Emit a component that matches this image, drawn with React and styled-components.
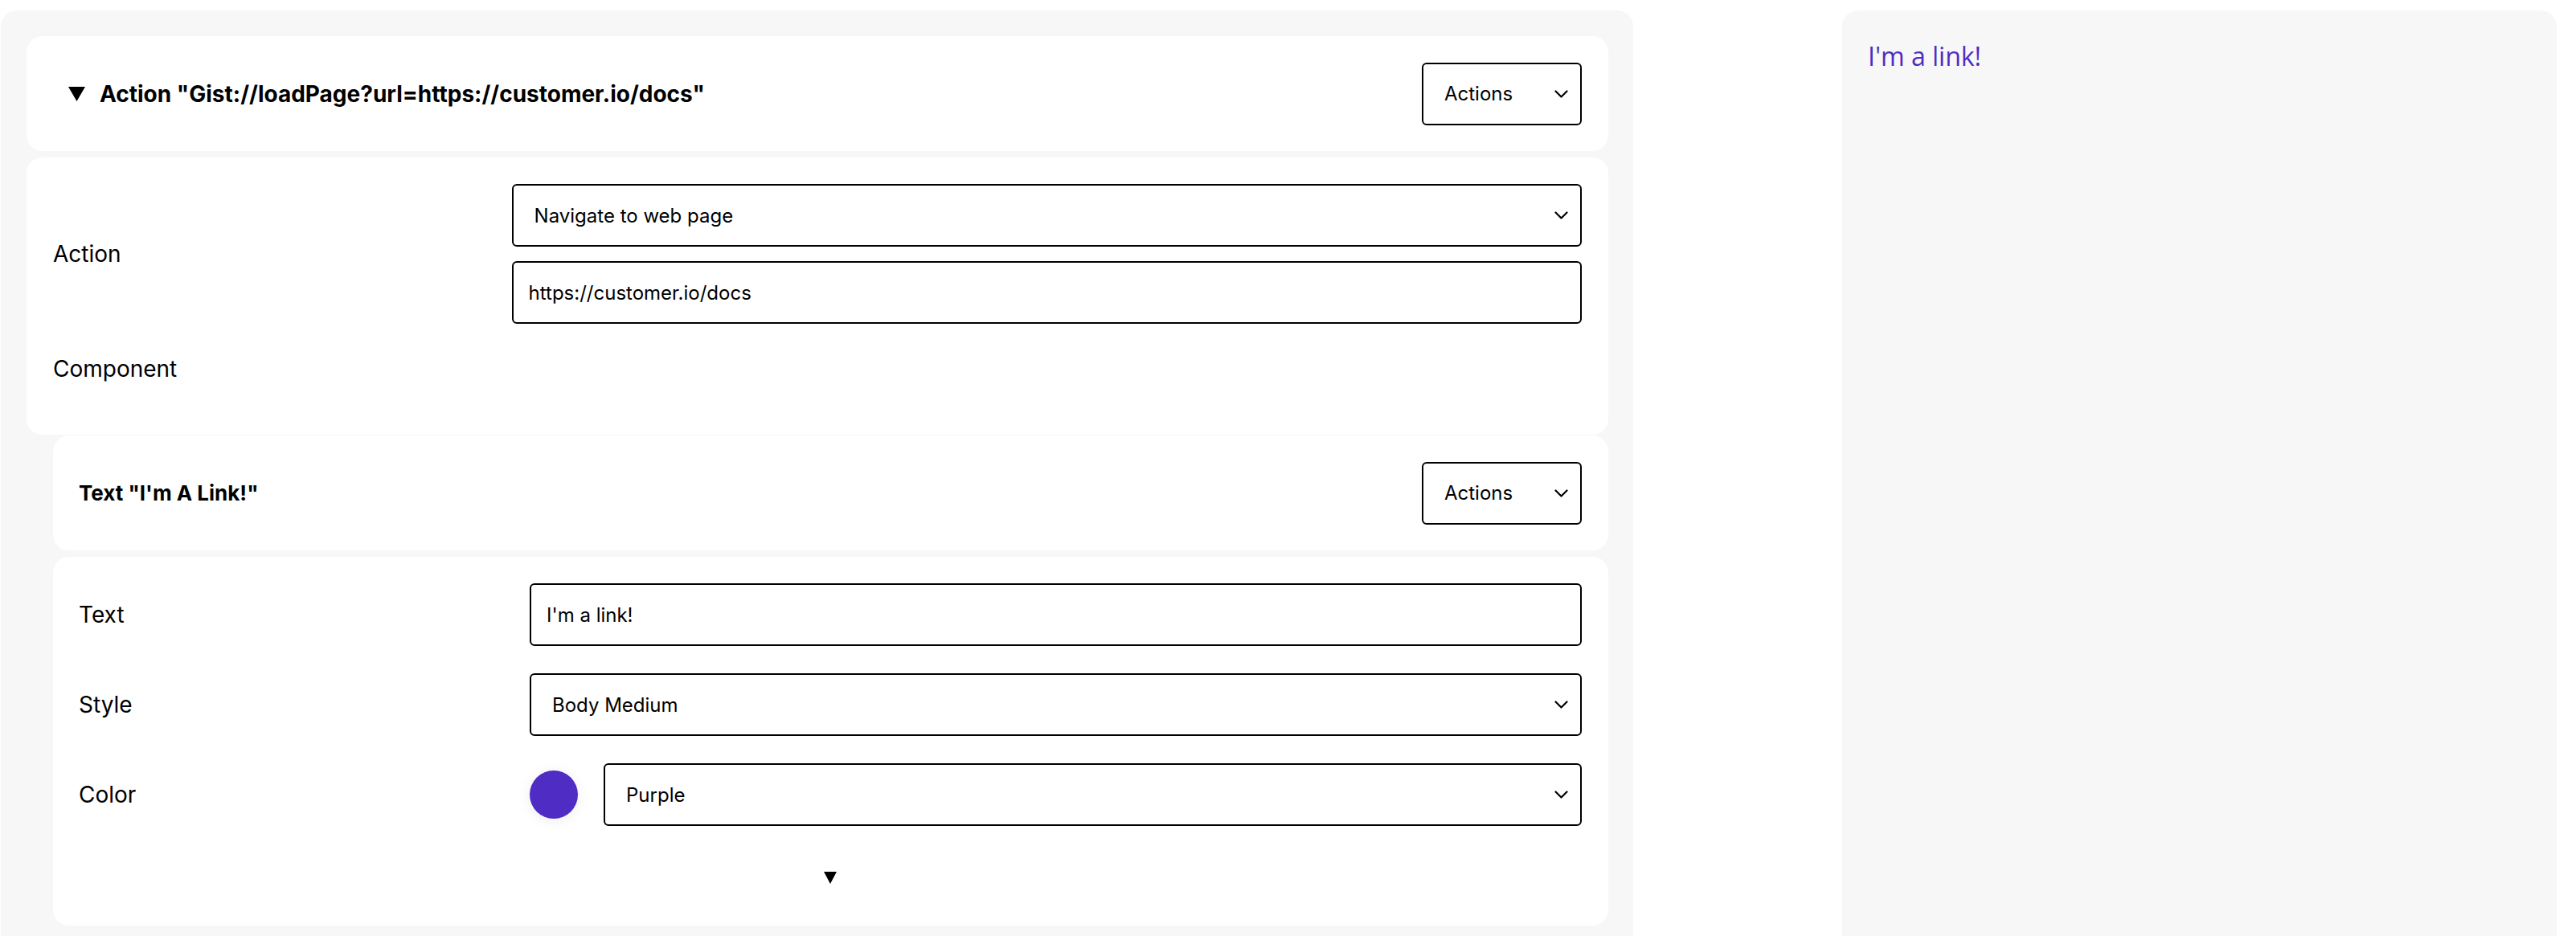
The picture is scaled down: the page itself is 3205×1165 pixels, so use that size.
import React from "react"
import styled, { createGlobalStyle } from "styled-components"

const GlobalStyle = createGlobalStyle`
  html, body {
    margin: 0;
    padding: 0;
    background: #ffffff;
  }
  body {
    font-family: Inter, "Noto Sans", sans-serif;
    color: #000000;
    overflow: hidden;
  }
`

const Page = styled.div`
  display: flex;
  align-items: stretch;
  gap: 260px;
  padding: 13px 0 0 1px;
  height: 1165px;
  box-sizing: border-box;
  overflow: hidden;
`

const Panel = styled.div`
  flex-shrink: 0;
  box-sizing: border-box;
  background: #f7f7f7;
  border-radius: 20px 20px 0 0;
  overflow: hidden;
`

const EditorPanel = styled(Panel)`
  width: 2031px;
  padding: 32px 31px 0 32px;
  display: flex;
  flex-direction: column;
`

const PreviewPanel = styled(Panel)`
  width: 889px;
  padding: 35px 32px;
`

const PreviewLink = styled.span`
  font-family: "Open Sans", sans-serif;
  font-size: 32px;
  color: #4f2cc4;
`

const Card = styled.div`
  background: #ffffff;
  border-radius: 20px;
  box-sizing: border-box;
  flex-shrink: 0;
  margin-top: ${(p) => p.$gap || 0}px;
`

const HeaderCard = styled(Card)`
  height: 143px;
  display: flex;
  align-items: center;
  justify-content: space-between;
  padding: 0 33px 0 ${(p) => p.$indent}px;
`

const HeaderTitle = styled.div`
  display: flex;
  align-items: center;
  gap: 18px;
  font-size: ${(p) => p.$size}px;
  font-weight: 700;
`

const BodyCard = styled(Card)`
  padding: 33px 33px ${(p) => p.$bottom}px ${(p) => p.$left}px;
`

const Nested = styled.div`
  padding-left: 33px;
  display: flex;
  flex-direction: column;
  flex-shrink: 0;
`

const FieldGrid = styled.div`
  display: grid;
  grid-template-columns: 30% 70%;
  row-gap: 34px;
  align-items: center;
`

const Label = styled.div`
  font-size: 28px;
  min-height: ${(p) => p.$minHeight || 0}px;
  display: flex;
  align-items: center;
`

const Stack = styled.div`
  display: flex;
  flex-direction: column;
  gap: 18px;
`

const boxBase = `
  box-sizing: border-box;
  height: 78px;
  border: 2px solid #000000;
  border-radius: 6px;
  background: #ffffff;
  font-family: Inter, "Noto Sans", sans-serif;
  font-size: 24px;
  color: #000000;
  display: flex;
  align-items: center;
`

const SelectBox = styled.div`
  ${boxBase}
  justify-content: space-between;
  padding: 0 15px 0 26px;
  width: ${(p) => (p.$width ? `${p.$width}px` : "auto")};
  flex: ${(p) => (p.$width ? "none" : "1 1 auto")};
  min-width: 0;
`

const TextBox = styled.div`
  ${boxBase}
  padding: 0 19px;
`

const ColorRow = styled.div`
  display: flex;
  align-items: center;
  gap: 32px;
`

const Swatch = styled.div`
  width: 60px;
  height: 60px;
  border-radius: 50%;
  background: ${(p) => p.$color};
  box-shadow: 0 2px 16px rgba(0, 0, 0, 0.08);
  flex-shrink: 0;
`

const Toggle = styled.div`
  display: flex;
  justify-content: center;
  margin-top: 57px;
  line-height: 0;
`

const Chevron = () => (
  <svg width="17" height="10" viewBox="0 0 17 10" fill="none">
    <path d="M1.5 1.5 L8.5 8.5 L15.5 1.5" stroke="#000" strokeWidth="2.2" strokeLinecap="round" strokeLinejoin="round" />
  </svg>
)

const Triangle = ({ w, h }) => (
  <svg width={w} height={h} viewBox={`0 0 ${w} ${h}`}>
    <polygon points={`0,0 ${w},0 ${w / 2},${h}`} fill="#000" />
  </svg>
)

const Select = ({ value, width }) => (
  <SelectBox $width={width}>
    <span>{value}</span>
    <Chevron />
  </SelectBox>
)

const App = () => {
  return (
    <>
      <GlobalStyle />
      <Page>
        <EditorPanel>
          <HeaderCard $indent={52}>
            <HeaderTitle $size={28}>
              <Triangle w={21} h={18} />
              <span>Action "Gist://loadPage?url=https://customer.io/docs"</span>
            </HeaderTitle>
            <Select value="Actions" width={199} />
          </HeaderCard>

          <BodyCard $gap={8} $left={33} $bottom={60}>
            <FieldGrid>
              <Label>Action</Label>
              <Stack>
                <Select value="Navigate to web page" />
                <TextBox>https://customer.io/docs</TextBox>
              </Stack>
              <Label $minHeight={44}>Component</Label>
              <div />
            </FieldGrid>
          </BodyCard>

          <Nested>
            <HeaderCard $gap={1} $indent={32}>
              <HeaderTitle $size={26}>Text "I'm A Link!"</HeaderTitle>
              <Select value="Actions" width={199} />
            </HeaderCard>

            <BodyCard $gap={8} $left={32} $bottom={52}>
              <FieldGrid>
                <Label>Text</Label>
                <TextBox>I'm a link!</TextBox>
                <Label>Style</Label>
                <Select value="Body Medium" />
                <Label>Color</Label>
                <ColorRow>
                  <Swatch $color="#4f2cc4" />
                  <Select value="Purple" />
                </ColorRow>
              </FieldGrid>
              <Toggle>
                <Triangle w={16} h={15} />
              </Toggle>
            </BodyCard>
          </Nested>
        </EditorPanel>

        <PreviewPanel>
          <PreviewLink>I'm a link!</PreviewLink>
        </PreviewPanel>
      </Page>
    </>
  )
}

export default App
